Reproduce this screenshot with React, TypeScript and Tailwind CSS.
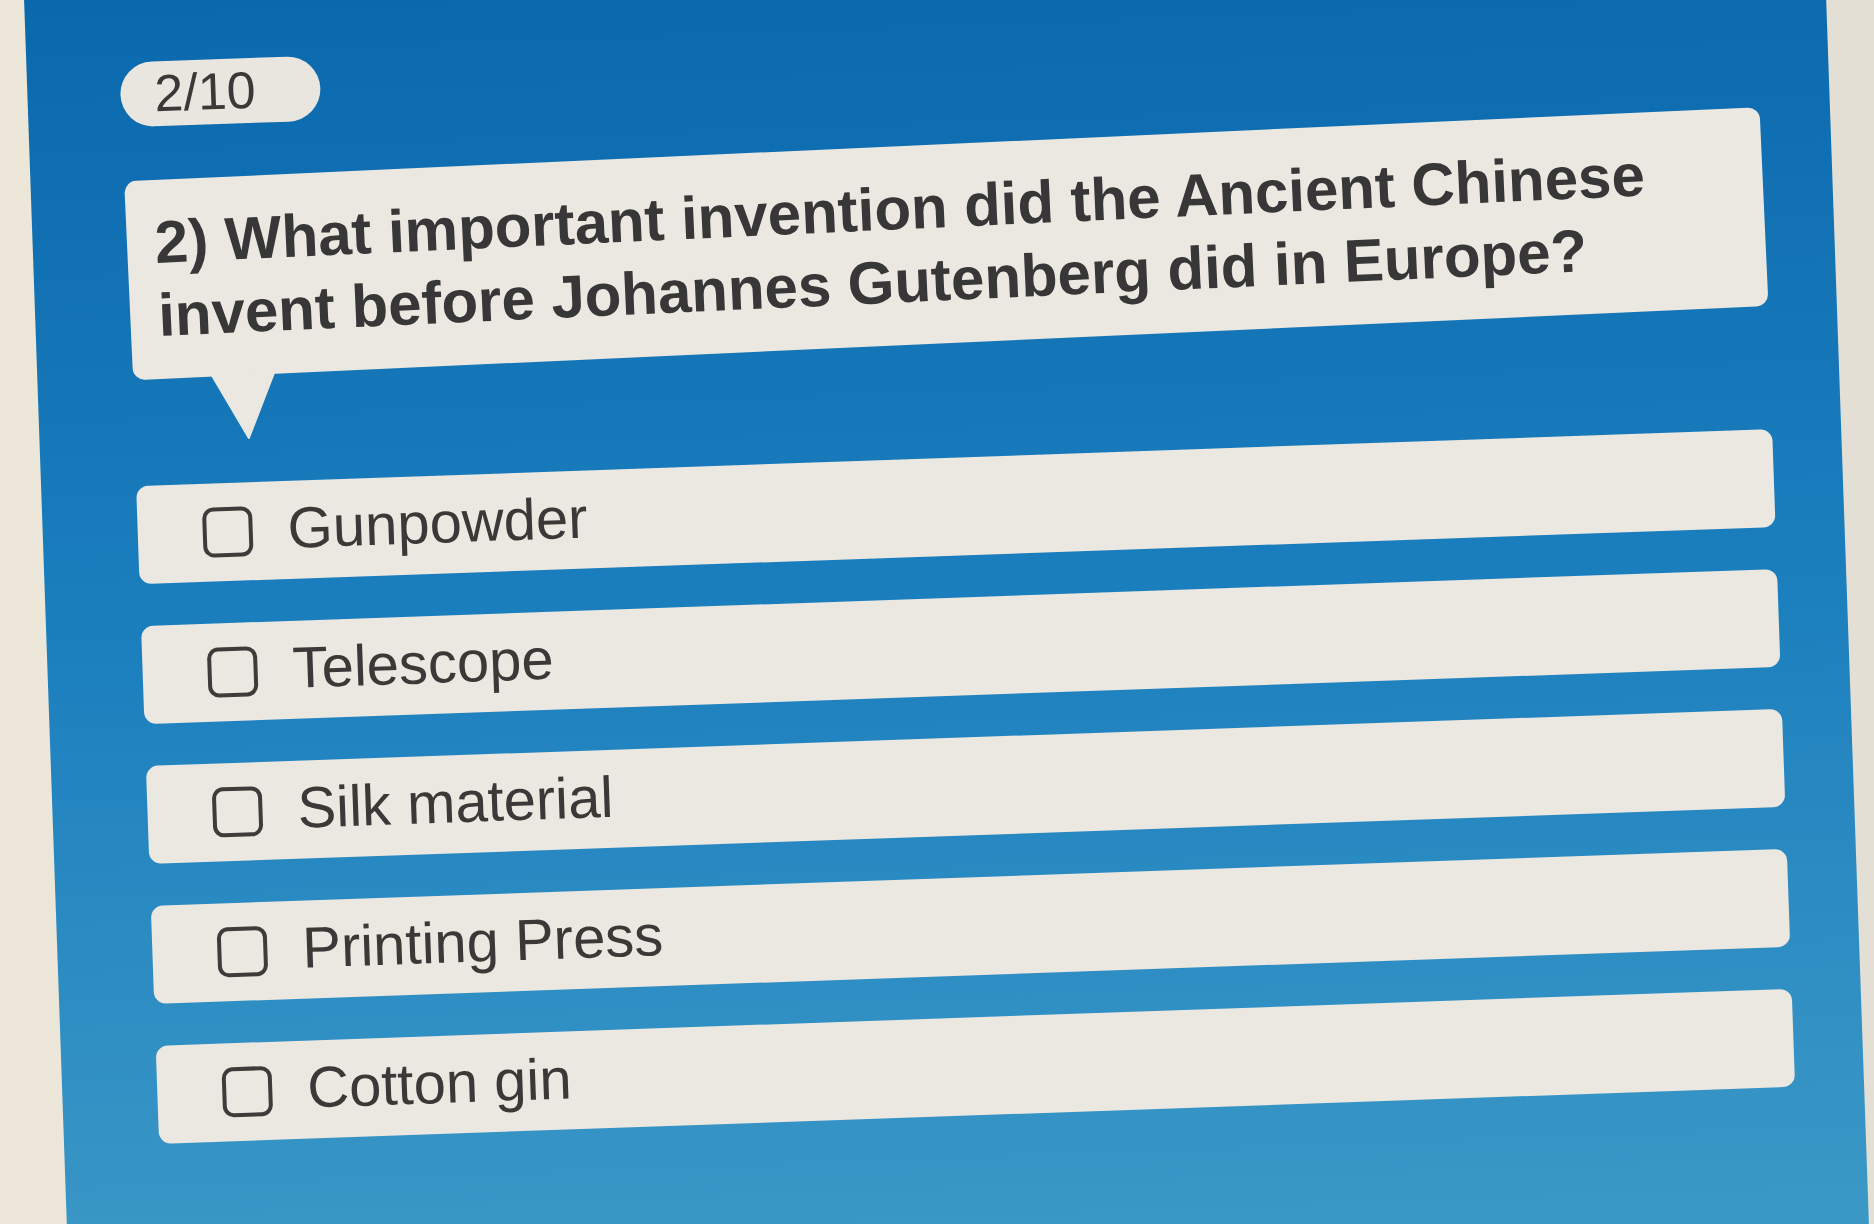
const options = ["Gunpowder", "Telescope", "Silk material", "Printing Press", "Cotton gin"]

function Checkbox() {
  return <div className="w-[50px] h-[50px] shrink-0 rounded-[11px] border-[4px] border-[#3d3c3a]" />
}

export default function App() {
  return (
    <div className="w-[1874px] h-[1224px] overflow-hidden bg-linear-to-r from-[#ece7d8] to-[#e3dfd5] font-['Liberation_Sans',Arial,sans-serif]">
      <div className="ml-[46px] mt-[-88px] w-[1801px] h-[1400px] -rotate-2 bg-linear-to-b from-[#0966ab] via-[#1b7fbe] to-[#3e9bc7]">
        <div className="flex flex-col pl-[95px] pt-[122px]">
          {/* progress pill */}
          <div className="ml-[-2px] w-[200px] h-[65px] rounded-full bg-[#e9e5df] pl-[34px] text-[52px] leading-[65px] text-[#3a3938]">
            2/10
          </div>

          {/* question bubble */}
          <div className="mt-[45px] -rotate-[0.6deg]">
            <div className="w-[1637px] rounded-[12px] bg-[#ebe7e1] px-[28px] pt-[26px] pb-[27px] text-[60px] font-bold leading-[73px] text-[#383737]">
              2) What important invention did the Ancient Chinese invent before Johannes Gutenberg did in Europe?
            </div>
            <svg width="64" height="66" viewBox="0 0 64 66" className="block ml-[78px] mt-[-1px]">
              <polygon points="1,0 63,0 35,64" fill="#ebe7e1" stroke="#ebe7e1" strokeWidth="2" strokeLinejoin="round" />
            </svg>
          </div>

          {/* answers */}
          <div className="mt-[50px] flex flex-col gap-[42px]">
            {options.map((o) => (
              <div key={o} className="w-[1637px] h-[98px] rounded-[12px] bg-[#ebe7e1] flex items-center pl-[65px]">
                <Checkbox />
                <span className="ml-[35px] mb-[4px] text-[58px] leading-none text-[#3a3938]">{o}</span>
              </div>
            ))}
          </div>
        </div>
      </div>
    </div>
  )
}
